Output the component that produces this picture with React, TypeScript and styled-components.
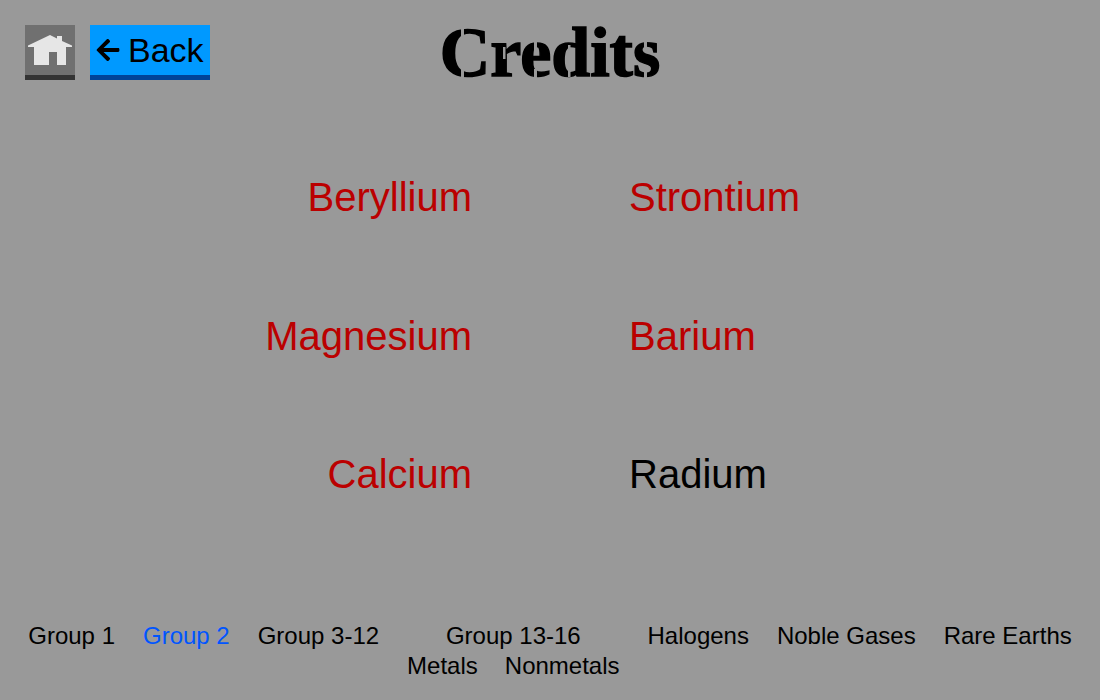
import * as React from "react";
import styled, { createGlobalStyle } from "styled-components";
import { FaArrowLeft } from "react-icons/fa";

const leftElements = ["Beryllium", "Magnesium", "Calcium"];
const rightElements = [
  { name: "Strontium", locked: false },
  { name: "Barium", locked: false },
  { name: "Radium", locked: true },
];

// thin gaps that give the serif title its stencil look: x, y, w, h
const stencilCuts = [
  [21, 2, 3, 14],
  [21, 42, 3, 14],
  [63, 22, 2.5, 12],
  [94, 16, 3, 10],
  [94, 44, 3, 10],
  [128, 20, 2.5, 32],
  [204, 16, 3, 10],
  [204, 44, 3, 10],
];

function HomeIcon() {
  return (
    <svg width="44" height="30" viewBox="0 0 44 30" fill="#e6e6e6">
      <path d="M0 10.5 L22 0 L29 3.5 L29 1 L34 1 L34 6 L44 10.5 L44 12 L38 12 L38 30 L29 30 L29 17 L21 17 L21 30 L6 30 L6 12 L0 12 Z" />
    </svg>
  );
}

function App() {
  return (
    <Page>
      <GlobalStyle />
      <Header>
        <NavButtons>
          <HomeButton>
            <HomeIcon />
          </HomeButton>
          <BackButton>
            <FaArrowLeft size={26} />
            Back
          </BackButton>
        </NavButtons>
        <Title>
          Credits
          <StencilCuts viewBox="0 0 220 55" aria-hidden="true">
            {stencilCuts.map(([x, y, w, h]) => (
              <rect key={`${x}-${y}`} x={x} y={y} width={w} height={h} />
            ))}
          </StencilCuts>
        </Title>
      </Header>
      <ElementGrid>
        <ElementColumn $align="right">
          {leftElements.map((name) => (
            <ElementName key={name}>{name}</ElementName>
          ))}
        </ElementColumn>
        <ElementColumn $align="left">
          {rightElements.map((el) => (
            <ElementName key={el.name} $locked={el.locked}>
              {el.name}
            </ElementName>
          ))}
        </ElementColumn>
      </ElementGrid>
      <Footer>
        <FooterLink>Group 1</FooterLink>
        <FooterLink $active>Group 2</FooterLink>
        <FooterLink>Group 3-12</FooterLink>
        <FooterGroup>
          <FooterLink>Group 13-16</FooterLink>
          <SubLinks>
            <FooterLink>Metals</FooterLink>
            <FooterLink>Nonmetals</FooterLink>
          </SubLinks>
        </FooterGroup>
        <FooterLink>Halogens</FooterLink>
        <FooterLink>Noble Gases</FooterLink>
        <FooterLink>Rare Earths</FooterLink>
      </Footer>
    </Page>
  );
}

const GlobalStyle = createGlobalStyle`
  html, body {
    margin: 0;
    padding: 0;
    background: #999999;
  }
`;

const Page = styled.div`
  display: flex;
  flex-direction: column;
  width: 1100px;
  height: 700px;
  overflow: hidden;
  background: #999999;
  color: #000000;
  font-family: "Liberation Sans", Arial, sans-serif;
`;

const Header = styled.header`
  display: grid;
  grid-template-columns: 1fr auto 1fr;
  padding: 25px 25px 0;
`;

const NavButtons = styled.div`
  display: flex;
  gap: 15px;
`;

const HomeButton = styled.div`
  display: flex;
  justify-content: center;
  align-items: center;
  box-sizing: border-box;
  width: 50px;
  height: 55px;
  background: #707070;
  border-bottom: 5px solid #333333;
`;

const BackButton = styled.div`
  display: flex;
  align-items: center;
  gap: 7px;
  box-sizing: border-box;
  width: 120px;
  height: 55px;
  padding-left: 5px;
  background: #0099ff;
  border-bottom: 5px solid #004499;
  font-size: 34px;
`;

const Title = styled.h1`
  position: relative;
  margin: 0;
  font-family: "Liberation Serif", "Times New Roman", serif;
  font-size: 70px;
  font-weight: 700;
  line-height: 55px;
  -webkit-text-stroke: 1.5px #000000;
`;

const StencilCuts = styled.svg`
  position: absolute;
  top: 0;
  left: 0;
  width: 220px;
  height: 55px;
  fill: #999999;
`;

const ElementGrid = styled.main`
  display: grid;
  grid-template-columns: 472px 1fr;
  column-gap: 157px;
  margin-top: 48px;
`;

const ElementColumn = styled.div<{ $align: "left" | "right" }>`
  display: grid;
  grid-auto-rows: 138.5px;
  text-align: ${(p) => p.$align};
`;

const ElementName = styled.div<{ $locked?: boolean }>`
  font-size: 40px;
  line-height: 138px;
  color: ${(p) => (p.$locked ? "#000000" : "#bb0000")};
`;

const Footer = styled.nav`
  display: flex;
  justify-content: center;
  align-items: flex-start;
  gap: 28px;
  margin-top: auto;
  padding-bottom: 19px;
  font-size: 24px;
  line-height: 30px;
`;

const FooterLink = styled.span<{ $active?: boolean }>`
  white-space: nowrap;
  color: ${(p) => (p.$active ? "#0055ff" : "#000000")};
`;

const FooterGroup = styled.div`
  display: flex;
  flex-direction: column;
  align-items: center;
`;

const SubLinks = styled.div`
  display: flex;
  gap: 27px;
`;

export default App;
